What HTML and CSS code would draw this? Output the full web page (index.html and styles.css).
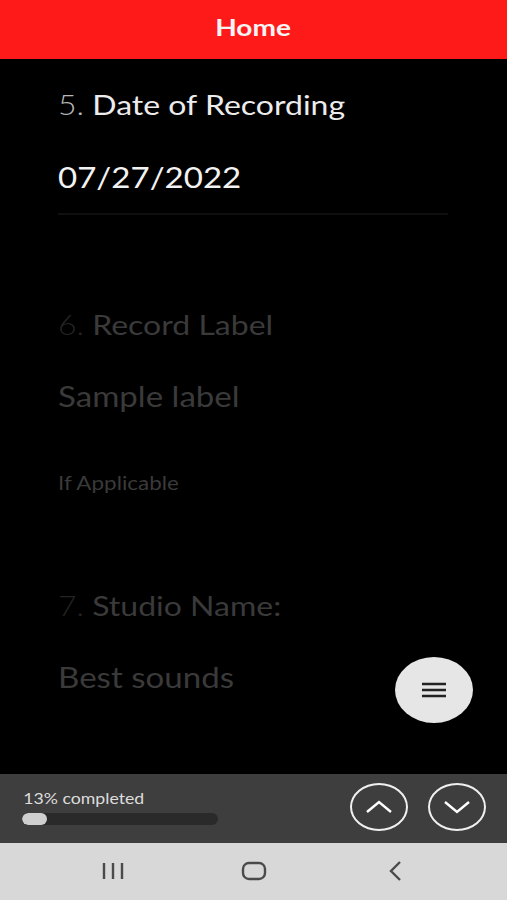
FILE: index.html
```html
<!DOCTYPE html>
<html lang="en">
<head>
  <meta charset="UTF-8">
  <meta name="viewport" content="width=device-width, initial-scale=1.0">
  <link rel="stylesheet" href="styles.css">
</head>
<body>
  <!-- Top bar -->
  <div class="topbar"><span class="wide">Home</span></div>

  <!-- Questions -->
  <div class="content">
    <div class="field">
      <div class="question"><span class="num">5.</span> Date of Recording</div>
      <div class="answer">07/27/2022</div>
      <div class="divider"></div>
    </div>

    <div class="field dim first-dim">
      <div class="question"><span class="num">6.</span> Record Label</div>
      <div class="answer">Sample label</div>
      <div class="hint">If Applicable</div>
    </div>

    <div class="field dim last">
      <div class="question"><span class="num">7.</span> Studio Name:</div>
      <div class="answer">Best sounds</div>
    </div>

    <button class="fab">
      <svg width="24" height="16" viewBox="0 0 24 16">
        <path d="M0 2h24M0 8h24M0 14h24" stroke="#222" stroke-width="2.6"/>
      </svg>
    </button>
  </div>

  <!-- Progress + navigation -->
  <div class="progressbar">
    <div class="progress">
      <div class="progress-text">13% completed</div>
      <div class="track"><div class="fill" style="width: 13%;"></div></div>
    </div>
    <div class="arrows">
      <button class="arrow">
        <svg width="30" height="18" viewBox="0 0 30 18"><path d="M3 14L15 4l12 10" fill="none" stroke="#fff" stroke-width="2.4"/></svg>
      </button>
      <button class="arrow">
        <svg width="30" height="18" viewBox="0 0 30 18"><path d="M3 4l12 10L27 4" fill="none" stroke="#fff" stroke-width="2.4"/></svg>
      </button>
    </div>
  </div>

  <!-- Android nav -->
  <div class="navbar">
    <div class="navcell">
      <svg width="22" height="18" viewBox="0 0 22 18"><path d="M2 1v16M11 1v16M20 1v16" stroke="#4a4a4a" stroke-width="2.4"/></svg>
    </div>
    <div class="navcell">
      <svg width="26" height="20" viewBox="0 0 26 20"><rect x="2" y="2" width="22" height="16" rx="6" fill="none" stroke="#4a4a4a" stroke-width="2.4"/></svg>
    </div>
    <div class="navcell">
      <svg width="16" height="22" viewBox="0 0 16 22"><path d="M13 2L4 11l9 9" fill="none" stroke="#4a4a4a" stroke-width="2.4"/></svg>
    </div>
  </div>
</body>
</html>
```

FILE: styles.css
```css
html {
	background-color: #000;
}

body {
	margin: 0;
	padding: 0;
	height: 100vh;
	display: flex;
	flex-direction: column;
	font-family: Lato, "Open Sans", sans-serif;
	background-color: #000;
	overflow: hidden;
}

/* the screenshot is a bit stretched sideways */
.wide,
.question,
.answer,
.hint,
.progress-text {
	transform-origin: left center;
}

.topbar {
	height: 59px;
	flex-shrink: 0;
	background-color: #ff1a1a;
	color: #f4f4f4;
	font-weight: bold;
	font-size: 23px;
	display: flex;
	align-items: center;
	justify-content: center;
	padding-bottom: 6px;
	box-sizing: border-box;
}

.wide {
	display: inline-block;
	transform: scaleX(1.22);
	transform-origin: center;
}

.content {
	flex: 1;
	position: relative;
	padding: 28px 59px 0 58px;
}

.question {
	font-size: 27px;
	line-height: 36px;
	color: #ececec;
	transform: scaleX(1.185);
}

.num {
	color: #b8b8b8;
	font-weight: 300;
}

.answer {
	font-size: 29px;
	line-height: 40px;
	margin-top: 34px;
	color: #f2f2f2;
	transform: scaleX(1.14);
}

.divider {
	height: 2px;
	margin-top: 16px;
	background-color: #0f0f0f;
}

.hint {
	font-size: 19px;
	line-height: 22px;
	margin-top: 56px;
	transform: scaleX(1.18);
}

.dim .question,
.dim .answer,
.dim .hint {
	color: #3a3a3a;
}

.dim .num {
	color: #242424;
}

.dim .answer {
	margin-top: 33px;
}

.first-dim {
	margin-top: 92px;
}

.last {
	margin-top: 94px;
}

.fab {
	position: absolute;
	left: 395px;
	top: 598px;
	width: 78px;
	height: 66px;
	border-radius: 50%;
	border: none;
	background-color: #e6e6e6;
	display: flex;
	align-items: center;
	justify-content: center;
	padding: 0;
}

.progressbar {
	height: 69px;
	flex-shrink: 0;
	background-color: #3e3e3e;
	display: flex;
	align-items: center;
	justify-content: space-between;
	padding: 0 21px 0 22px;
	box-sizing: border-box;
}

.progress {
	width: 196px;
	margin-top: -4px;
}

.progress-text {
	font-size: 15px;
	color: #dcdcdc;
	margin-bottom: 6px;
	padding-left: 1px;
	transform: scaleX(1.18);
}

.track {
	height: 12px;
	border-radius: 6px;
	background-color: #2a2a2a;
	overflow: hidden;
}

.fill {
	height: 100%;
	border-radius: 6px;
	background-color: #cfcfcf;
}

.arrows {
	display: flex;
	gap: 20px;
	margin-top: -3px;
}

.arrow {
	width: 58px;
	height: 48px;
	border-radius: 50%;
	border: 2px solid #f0f0f0;
	background: none;
	display: flex;
	align-items: center;
	justify-content: center;
	padding: 0;
	box-sizing: border-box;
}

.navbar {
	height: 57px;
	flex-shrink: 0;
	background-color: #d8d8d8;
	display: flex;
	align-items: center;
	justify-content: center;
	padding-bottom: 2px;
	box-sizing: border-box;
}

.navcell {
	width: 141px;
	display: flex;
	justify-content: center;
}
```
